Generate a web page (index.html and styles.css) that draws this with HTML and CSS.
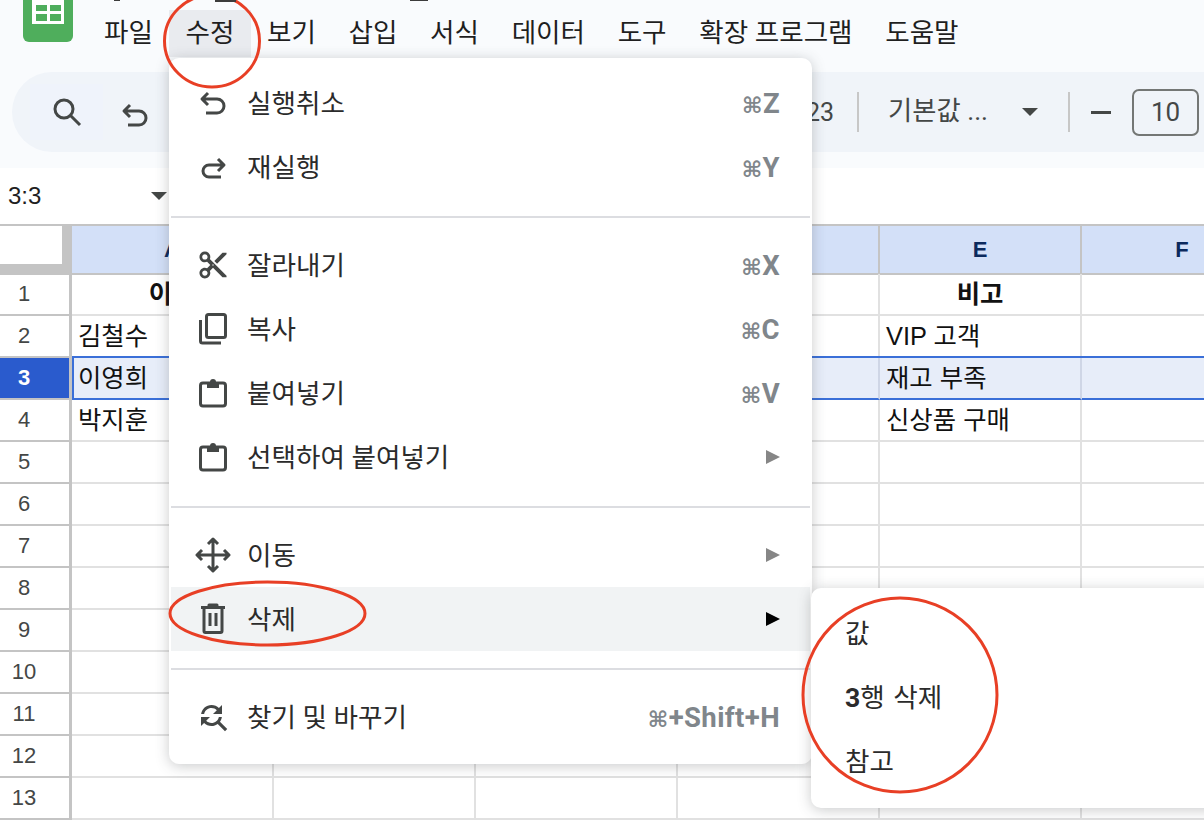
FILE: index.html
```html
<!DOCTYPE html>
<html lang="ko">
<head>
    <meta charset="UTF-8">
    <meta name="viewport" content="width=device-width, initial-scale=1.0">
    <title>Google Sheets 수정 메뉴</title>
    <link rel="stylesheet" href="styles.css">
</head>
<body>
    <div class="app">
        <header class="topbar">
            <svg class="logo" width="50" height="42" viewBox="0 0 50 42">
                <rect y="-12" width="50" height="54" rx="6" fill="#4fae5c"/>
                <rect x="9" y="-6" width="32" height="30" fill="#fff"/>
                <rect x="13" y="5" width="11" height="6" fill="#4fae5c"/>
                <rect x="27" y="5" width="11" height="6" fill="#4fae5c"/>
                <rect x="13" y="14" width="11" height="7" fill="#4fae5c"/>
                <rect x="27" y="14" width="11" height="7" fill="#4fae5c"/>
            </svg>
            <nav class="menubar">
                <span class="menubar-item">파일</span>
                <span class="menubar-item active">수정</span>
                <span class="menubar-item">보기</span>
                <span class="menubar-item">삽입</span>
                <span class="menubar-item">서식</span>
                <span class="menubar-item">데이터</span>
                <span class="menubar-item">도구</span>
                <span class="menubar-item">확장 프로그램</span>
                <span class="menubar-item">도움말</span>
            </nav>
        </header>

        <div class="toolbar-wrap">
            <div class="toolbar">
                <div class="tool-search">
                    <svg class="icon" width="32" height="32" viewBox="0 0 32 32"><circle cx="13" cy="13" r="9"/><path d="M19.5 19.5 L29 29"/></svg>
                </div>
                <svg class="icon tool-undo" width="32" height="32" viewBox="0 0 32 32"><path d="M11 6 L5 12 L11 18 M6 12 H20 a7 7 0 0 1 0 14 H9"/></svg>
                <span class="tool-spacer"></span>
                <span class="tool-format">123</span>
                <span class="tool-divider"></span>
                <span class="tool-font">기본값 ...</span>
                <span class="caret caret-font"></span>
                <span class="tool-divider"></span>
                <span class="tool-minus"></span>
                <span class="tool-size">10</span>
            </div>
        </div>

        <div class="formula-bar">
            <span class="name-box">3:3</span>
            <span class="caret"></span>
        </div>

        <div class="sheet">
            <div class="row row-head">
                <div class="corner"><span></span></div>
                <div class="col-head">A</div>
                <div class="col-head"></div>
                <div class="col-head"></div>
                <div class="col-head"></div>
                <div class="col-head">E</div>
                <div class="col-head">F</div>
            </div>
            <div class="row"><div class="row-num">1</div><div class="cell bold">이름</div><div class="cell"></div><div class="cell"></div><div class="cell"></div><div class="cell bold">비고</div><div class="cell"></div></div>
            <div class="row"><div class="row-num">2</div><div class="cell">김철수</div><div class="cell"></div><div class="cell"></div><div class="cell"></div><div class="cell">VIP 고객</div><div class="cell"></div></div>
            <div class="row selected"><div class="row-num">3</div><div class="cell">이영희</div><div class="cell"></div><div class="cell"></div><div class="cell"></div><div class="cell">재고 부족</div><div class="cell"></div></div>
            <div class="row"><div class="row-num">4</div><div class="cell">박지훈</div><div class="cell"></div><div class="cell"></div><div class="cell"></div><div class="cell">신상품 구매</div><div class="cell"></div></div>
            <div class="row"><div class="row-num">5</div><div class="cell"></div><div class="cell"></div><div class="cell"></div><div class="cell"></div><div class="cell"></div><div class="cell"></div></div>
            <div class="row"><div class="row-num">6</div><div class="cell"></div><div class="cell"></div><div class="cell"></div><div class="cell"></div><div class="cell"></div><div class="cell"></div></div>
            <div class="row"><div class="row-num">7</div><div class="cell"></div><div class="cell"></div><div class="cell"></div><div class="cell"></div><div class="cell"></div><div class="cell"></div></div>
            <div class="row"><div class="row-num">8</div><div class="cell"></div><div class="cell"></div><div class="cell"></div><div class="cell"></div><div class="cell"></div><div class="cell"></div></div>
            <div class="row"><div class="row-num">9</div><div class="cell"></div><div class="cell"></div><div class="cell"></div><div class="cell"></div><div class="cell"></div><div class="cell"></div></div>
            <div class="row"><div class="row-num">10</div><div class="cell"></div><div class="cell"></div><div class="cell"></div><div class="cell"></div><div class="cell"></div><div class="cell"></div></div>
            <div class="row"><div class="row-num">11</div><div class="cell"></div><div class="cell"></div><div class="cell"></div><div class="cell"></div><div class="cell"></div><div class="cell"></div></div>
            <div class="row"><div class="row-num">12</div><div class="cell"></div><div class="cell"></div><div class="cell"></div><div class="cell"></div><div class="cell"></div><div class="cell"></div></div>
            <div class="row"><div class="row-num">13</div><div class="cell"></div><div class="cell"></div><div class="cell"></div><div class="cell"></div><div class="cell"></div><div class="cell"></div></div>
        </div>

        <!-- Edit menu -->
        <div class="menu edit-menu">
            <div class="menu-item">
                <svg class="icon" width="36" height="36" viewBox="-2 -2 36 36"><path d="M11 6 L5 12 L11 18 M6 12 H20 a7 7 0 0 1 0 14 H9"/></svg>
                <span class="menu-label">실행취소</span>
                <span class="shortcut"><i>⌘</i>Z</span>
            </div>
            <div class="menu-item">
                <svg class="icon" width="36" height="36" viewBox="-2 -2 36 36"><path d="M21 8 L27 14 L21 20 M26 14 H12 a6 6 0 0 0 0 12 H24"/></svg>
                <span class="menu-label">재실행</span>
                <span class="shortcut"><i>⌘</i>Y</span>
            </div>
            <div class="menu-line"></div>
            <div class="menu-item">
                <svg class="icon-fill" width="36" height="36" viewBox="-1.3 -1.3 26.6 26.6"><path d="M9.64 7.64c.23-.5.36-1.05.36-1.64 0-2.21-1.79-4-4-4S2 3.79 2 6s1.79 4 4 4c.59 0 1.14-.13 1.64-.36L10 12l-2.36 2.36C7.14 14.13 6.59 14 6 14c-2.21 0-4 1.79-4 4s1.79 4 4 4 4-1.79 4-4c0-.59-.13-1.14-.36-1.64L12 14l7 7h3v-1L9.64 7.64zM6 8c-1.1 0-2-.89-2-2s.9-2 2-2 2 .89 2 2-.9 2-2 2zm0 12c-1.1 0-2-.89-2-2s.9-2 2-2 2 .89 2 2-.9 2-2 2zm6-7.5c-.28 0-.5-.22-.5-.5s.22-.5.5-.5.5.22.5.5-.22.5-.5.5zM19 3l-6 6 2 2 7-7V3z"/></svg>
                <span class="menu-label">잘라내기</span>
                <span class="shortcut"><i>⌘</i>X</span>
            </div>
            <div class="menu-item">
                <svg class="icon" width="36" height="36" viewBox="-2 -2 36 36"><rect x="9.5" y="1.5" width="19" height="23" rx="2"/><path d="M3.5 7 V28 a2 2 0 0 0 2 2 H24"/></svg>
                <span class="menu-label">복사</span>
                <span class="shortcut"><i>⌘</i>C</span>
            </div>
            <div class="menu-item">
                <svg class="icon" width="36" height="36" viewBox="-2 -2 36 36"><rect x="3.5" y="6" width="25" height="23" rx="2.5"/><path class="solid" d="M10 5 H13 a3 3 0 0 1 6 0 H22 V11 H10 Z"/></svg>
                <span class="menu-label">붙여넣기</span>
                <span class="shortcut"><i>⌘</i>V</span>
            </div>
            <div class="menu-item">
                <svg class="icon" width="36" height="36" viewBox="-2 -2 36 36"><rect x="3.5" y="6" width="25" height="23" rx="2.5"/><path class="solid" d="M10 5 H13 a3 3 0 0 1 6 0 H22 V11 H10 Z"/></svg>
                <span class="menu-label">선택하여 붙여넣기</span>
                <span class="arrow"></span>
            </div>
            <div class="menu-line"></div>
            <div class="menu-item">
                <svg class="icon" width="36" height="36" viewBox="0 0 36 36"><path d="M18 2 V34 M2 18 H34 M13 7 L18 2 L23 7 M13 29 L18 34 L23 29 M7 13 L2 18 L7 23 M29 13 L34 18 L29 23"/></svg>
                <span class="menu-label">이동</span>
                <span class="arrow"></span>
            </div>
            <div class="menu-item hover">
                <svg class="icon" width="36" height="36" viewBox="0 0 36 36"><path d="M6 6.5 H30 M14 6.5 V4 H22 V6.5 M9 7 V30 a1.5 1.5 0 0 0 1.5 1.5 H25.5 a1.5 1.5 0 0 0 1.5 -1.5 V7 M15 12 V25 M21 12 V25"/></svg>
                <span class="menu-label">삭제</span>
                <span class="arrow"></span>
            </div>
            <div class="menu-line"></div>
            <div class="menu-item">
                <svg class="icon-fill" width="36" height="36" viewBox="0 0 24 24"><path d="M11 6c1.38 0 2.63.56 3.54 1.46L12 10h6V4l-2.05 2.05C14.68 4.78 12.93 4 11 4c-3.53 0-6.43 2.61-6.92 6H6.1c.46-2.28 2.48-4 4.9-4zm5.64 9.14c.66-.9 1.12-1.97 1.28-3.14H15.9c-.46 2.28-2.48 4-4.9 4-1.38 0-2.63-.56-3.54-1.46L10 12H4v6l2.05-2.05C7.32 17.22 9.07 18 11 18c1.55 0 2.98-.51 4.14-1.36L20 21.49 21.49 20l-4.85-4.86z"/></svg>
                <span class="menu-label">찾기 및 바꾸기</span>
                <span class="shortcut"><i>⌘</i>+Shift+H</span>
            </div>
        </div>

        <!-- Delete submenu -->
        <div class="menu sub-menu">
            <div class="sub-item">값</div>
            <div class="sub-item"><b>3</b>행 삭제</div>
            <div class="sub-item">참고</div>
        </div>

        <!-- Red marks drawn over the screenshot, and the cut-off title above them -->
        <svg class="marks" width="1204" height="820" viewBox="0 0 1204 820">
            <ellipse cx="212" cy="41" rx="47.5" ry="46"/>
            <ellipse cx="267.5" cy="613.5" rx="97.5" ry="31.5"/>
            <ellipse cx="900" cy="695" rx="97" ry="97"/>
            <path class="cut-title" d="M215 0 H236 V2 H215 Z M410 0 H428 V1 H410 Z M114 0 H120 V1 H114 Z"/>
        </svg>
    </div>
</body>
</html>
```

FILE: styles.css
```css
* {
    margin: 0;
    padding: 0;
    box-sizing: border-box;
}

body {
    font-family: Roboto, 'Noto Sans CJK KR', sans-serif;
    color: #1f1f1f;
    background: #fff;
}

.app {
    position: relative;
    width: 1204px;
    height: 820px;
    overflow: hidden;
}

/* Top bar */
.topbar {
    display: flex;
    align-items: flex-start;
    height: 72px;
    background: #f9fbfd;
}

.logo {
    flex: none;
    margin-left: 23px;
}

.menubar {
    display: flex;
    margin-left: 14.7px;
    margin-top: 10px;
}

.menubar-item {
    height: 47px;
    line-height: 46px;
    padding: 0 16.3px;
    font-size: 26.6px;
    white-space: nowrap;
}

.menubar-item.active {
    background: #e9ebef;
}

/* Toolbar */
.toolbar-wrap {
    height: 96px;
    padding: 0 0 16px 12px;
    background: #f9fbfd;
}

.toolbar {
    display: flex;
    align-items: center;
    height: 80px;
    padding-left: 18px;
    background: #f0f4f9;
    border-radius: 40px 0 0 40px;
}

.tool-search {
    display: flex;
    align-items: center;
    justify-content: center;
    width: 73px;
    height: 56px;
    background: #eff3fb;
}

.tool-undo {
    margin-left: 16px;
    margin-top: 6px;
}

.tool-spacer {
    flex: 1;
}

.tool-format {
    font-size: 25px;
    color: #444746;
}

.tool-divider {
    width: 2px;
    height: 40px;
    background: #c7c7c7;
}

.tool-format + .tool-divider {
    margin-left: 23px;
}

.tool-font {
    margin-left: 29px;
    font-size: 26.3px;
    line-height: 34px;
    padding-bottom: 3px;
    color: #444746;
    white-space: nowrap;
}

.caret {
    display: inline-block;
    width: 0;
    height: 0;
    border-left: 8px solid transparent;
    border-right: 8px solid transparent;
    border-top: 8px solid #444746;
}

.caret-font {
    margin-left: 34px;
    margin-right: 30px;
}

.tool-minus {
    width: 20px;
    height: 3px;
    margin-left: 21px;
    background: #444746;
}

.tool-size {
    width: 67px;
    height: 47px;
    margin-left: 21px;
    margin-right: 5px;
    line-height: 43px;
    text-align: center;
    font-size: 26px;
    color: #444746;
    border: 2px solid #747775;
    border-radius: 7px;
}

/* Name box */
.formula-bar {
    display: flex;
    align-items: center;
    justify-content: space-between;
    width: 168px;
    height: 56px;
    padding: 0 1px 0 8px;
}

.name-box {
    font-family: 'Liberation Sans', sans-serif;
    font-size: 24px;
}

/* Grid */
.sheet {
    font-family: 'Liberation Sans', 'Noto Sans CJK KR', sans-serif;
    border-top: 2px solid #c4c4c4;
}

.row {
    display: grid;
    grid-template-columns: 72px repeat(6, 202px);
    height: 42px;
}

.row-head {
    height: 48px;
}

.corner {
    background: #c4c4c4;
}

.corner span {
    display: block;
    width: 62px;
    height: 38px;
    background: #fff;
}

.col-head {
    text-align: center;
    line-height: 47px;
    font-size: 22px;
    font-weight: bold;
    color: #0b2a5e;
    background: #d3e0f8;
    border-right: 2px solid #c4c4c4;
    border-bottom: 2px solid #c4c4c4;
}

.row-num {
    text-align: center;
    line-height: 39px;
    padding-right: 21px;
    font-size: 22px;
    color: #444746;
    border-right: 3px solid #c4c4c4;
    border-bottom: 2px solid #c4c4c4;
}

.cell {
    padding-left: 6px;
    line-height: 40px;
    font-size: 25.4px;
    color: #111;
    white-space: nowrap;
    border-right: 2px solid #e1e1e1;
    border-bottom: 2px solid #e1e1e1;
}

.cell.bold {
    padding-left: 0;
    text-align: center;
    font-weight: bold;
}

.selected .row-num {
    color: #fff;
    font-weight: bold;
    background: #2a5bcd;
}

.selected .cell {
    background: #e7edf9;
    border-right-color: #cfd6e6;
    border-bottom-color: #3a6fd8;
    box-shadow: 0 -2px 0 #3a6fd8;
}

.selected .row-num + .cell {
    border-left: 2px solid #3a6fd8;
    padding-left: 4px;
}

/* Menus */
.menu {
    position: absolute;
    background: #fff;
    border-radius: 10px;
    box-shadow: 0 2px 14px rgba(60, 64, 67, 0.28);
}

.edit-menu {
    left: 169px;
    top: 58px;
    width: 643px;
    height: 706px;
    padding: 13px 2px 0;
}

.menu-item {
    display: flex;
    align-items: center;
    height: 64px;
    padding-left: 24px;
    padding-right: 30px;
    font-size: 26.6px;
}

.menu-item.hover {
    background: #f1f3f4;
}

.menu-item svg {
    flex: none;
}

.icon {
    fill: none;
    stroke: #444746;
    stroke-width: 3;
    stroke-linejoin: round;
}

.icon .solid {
    fill: #444746;
    stroke: none;
}

.icon-fill {
    fill: #444746;
}

.menu-label {
    flex: 1;
    margin-left: 16px;
    padding-bottom: 4px;
    color: #2b2b2b;
    white-space: nowrap;
}

.shortcut {
    font-weight: 700;
    font-size: 27.5px;
    letter-spacing: 0.4px;
    color: #80868b;
    white-space: nowrap;
}

.shortcut i {
    font-family: 'DejaVu Sans', sans-serif;
    font-style: normal;
    font-weight: bold;
    font-size: 22px;
}

.arrow {
    width: 0;
    height: 0;
    border-left: 14px solid #868686;
    border-top: 7px solid transparent;
    border-bottom: 7px solid transparent;
}

.hover .arrow {
    border-left-color: #000;
}

.menu-line {
    height: 2px;
    margin: 17px 0 15px;
    background: #dcdde1;
}

.sub-menu {
    left: 811px;
    top: 588px;
    width: 420px;
    height: 220px;
    padding-top: 14px;
}

.sub-item {
    height: 64px;
    padding-left: 34px;
    line-height: 64px;
    font-size: 26.6px;
    word-spacing: 2px;
    color: #2b2b2b;
}

.marks {
    position: absolute;
    left: 0;
    top: 0;
    pointer-events: none;
    fill: none;
    stroke: #e83f25;
    stroke-width: 3;
}

.marks .cut-title {
    fill: #3c3c3c;
    stroke: none;
}
```
